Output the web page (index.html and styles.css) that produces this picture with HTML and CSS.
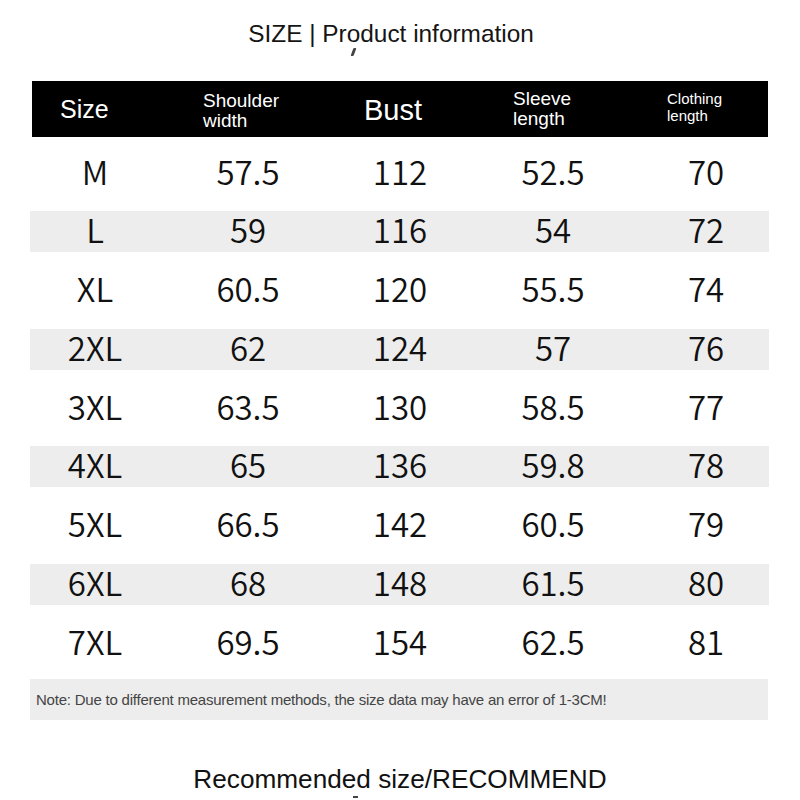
FILE: index.html
```html
<!DOCTYPE html>
<html>
<head>
<meta charset="utf-8">
<link rel="stylesheet" href="styles.css">
</head>
<body>
<div class="page">
  <div class="title">SIZE | Product information</div>
  <div class="title-mark"></div>
  <div class="chart">
    <div class="head">
      <div class="h h-size">Size</div>
      <div class="h h-two h-shoulder">Shoulder<br>width</div>
      <div class="h h-bust">Bust</div>
      <div class="h h-two h-sleeve">Sleeve<br>length</div>
      <div class="h h-two h-cloth">Clothing<br>length</div>
    </div>
    <div class="rows">
      <div class="row"><span>M</span><span>57.5</span><span>112</span><span>52.5</span><span>70</span></div>
      <div class="row alt"><span>L</span><span>59</span><span>116</span><span>54</span><span>72</span></div>
      <div class="row"><span>XL</span><span>60.5</span><span>120</span><span>55.5</span><span>74</span></div>
      <div class="row alt"><span>2XL</span><span>62</span><span>124</span><span>57</span><span>76</span></div>
      <div class="row"><span>3XL</span><span>63.5</span><span>130</span><span>58.5</span><span>77</span></div>
      <div class="row alt"><span>4XL</span><span>65</span><span>136</span><span>59.8</span><span>78</span></div>
      <div class="row"><span>5XL</span><span>66.5</span><span>142</span><span>60.5</span><span>79</span></div>
      <div class="row alt"><span>6XL</span><span>68</span><span>148</span><span>61.5</span><span>80</span></div>
      <div class="row"><span>7XL</span><span>69.5</span><span>154</span><span>62.5</span><span>81</span></div>
    </div>
    <div class="note">Note: Due to different measurement methods, the size data may have an error of 1-3CM!</div>
  </div>
  <div class="recommend">Recommended size/RECOMMEND</div>
  <div class="rec-mark"></div>
</div>
</body>
</html>
```
FILE: styles.css
```css
html, body {
  margin: 0;
  padding: 0;
  background: #ffffff;
}
.page {
  width: 800px;
  height: 800px;
  overflow: hidden;
  font-family: "Liberation Sans", Arial, sans-serif;
  color: #111;
}
.title {
  padding-top: 20px;
  padding-right: 18px;
  height: 28px;
  line-height: 28px;
  font-size: 24.4px;
  text-align: center;
  color: #151515;
}
.title-mark {
  width: 3px;
  height: 8px;
  margin: 0 0 0 352px;
  background: #444;
  transform: skewX(-20deg);
  border-radius: 1px;
}
.chart {
  margin: 25px 32px 0 31px;
}
.head {
  height: 56px;
  background: #000;
  color: #fff;
  display: grid;
  grid-template-columns: 143px 161px 149px 154px 1fr;
  padding-left: 28px;
  align-items: center;
  margin-left: 1px;
}
.h-size {
  font-size: 25px;
  line-height: 28px;
}
.h-two {
  font-size: 19px;
  line-height: 20px;
}
.h-shoulder {
  padding-top: 3px;
}
.h-bust {
  font-size: 29px;
  line-height: 30px;
  padding-top: 2px;
}
.h-sleeve {
  padding-top: 0px;
}
.h-cloth {
  font-size: 15px;
  line-height: 17px;
  padding-bottom: 4px;
}
.rows {
  display: flex;
  flex-direction: column;
  gap: 17.8px;
  padding: 15.5px 0 15px;
}
.row {
  height: 41px;
  display: grid;
  grid-template-columns: 128px 178px 126px 180px 1fr;
  align-items: center;
  font-family: "Noto Sans CJK SC", "Noto Sans", sans-serif;
  font-size: 33px;
  font-weight: 350;
  color: #111;
  margin-left: -1px;
  margin-right: -1px;
  padding-left: 1px;
}
.row span {
  text-align: center;
  line-height: 36px;
  padding-bottom: 5px;
}
.row.alt {
  background: #ededed;
}
.note {
  height: 41px;
  line-height: 41px;
  background: #ededed;
  margin-left: -1px;
  padding-left: 6px;
  font-size: 15px;
  color: #444;
  letter-spacing: -0.22px;
}
.recommend {
  margin-top: 45px;
  text-align: center;
  font-size: 26.2px;
  line-height: 28px;
  color: #111;
}
.rec-mark {
  width: 5px;
  height: 2px;
  background: #444;
  margin: 3px 0 0 353px;
}
```
